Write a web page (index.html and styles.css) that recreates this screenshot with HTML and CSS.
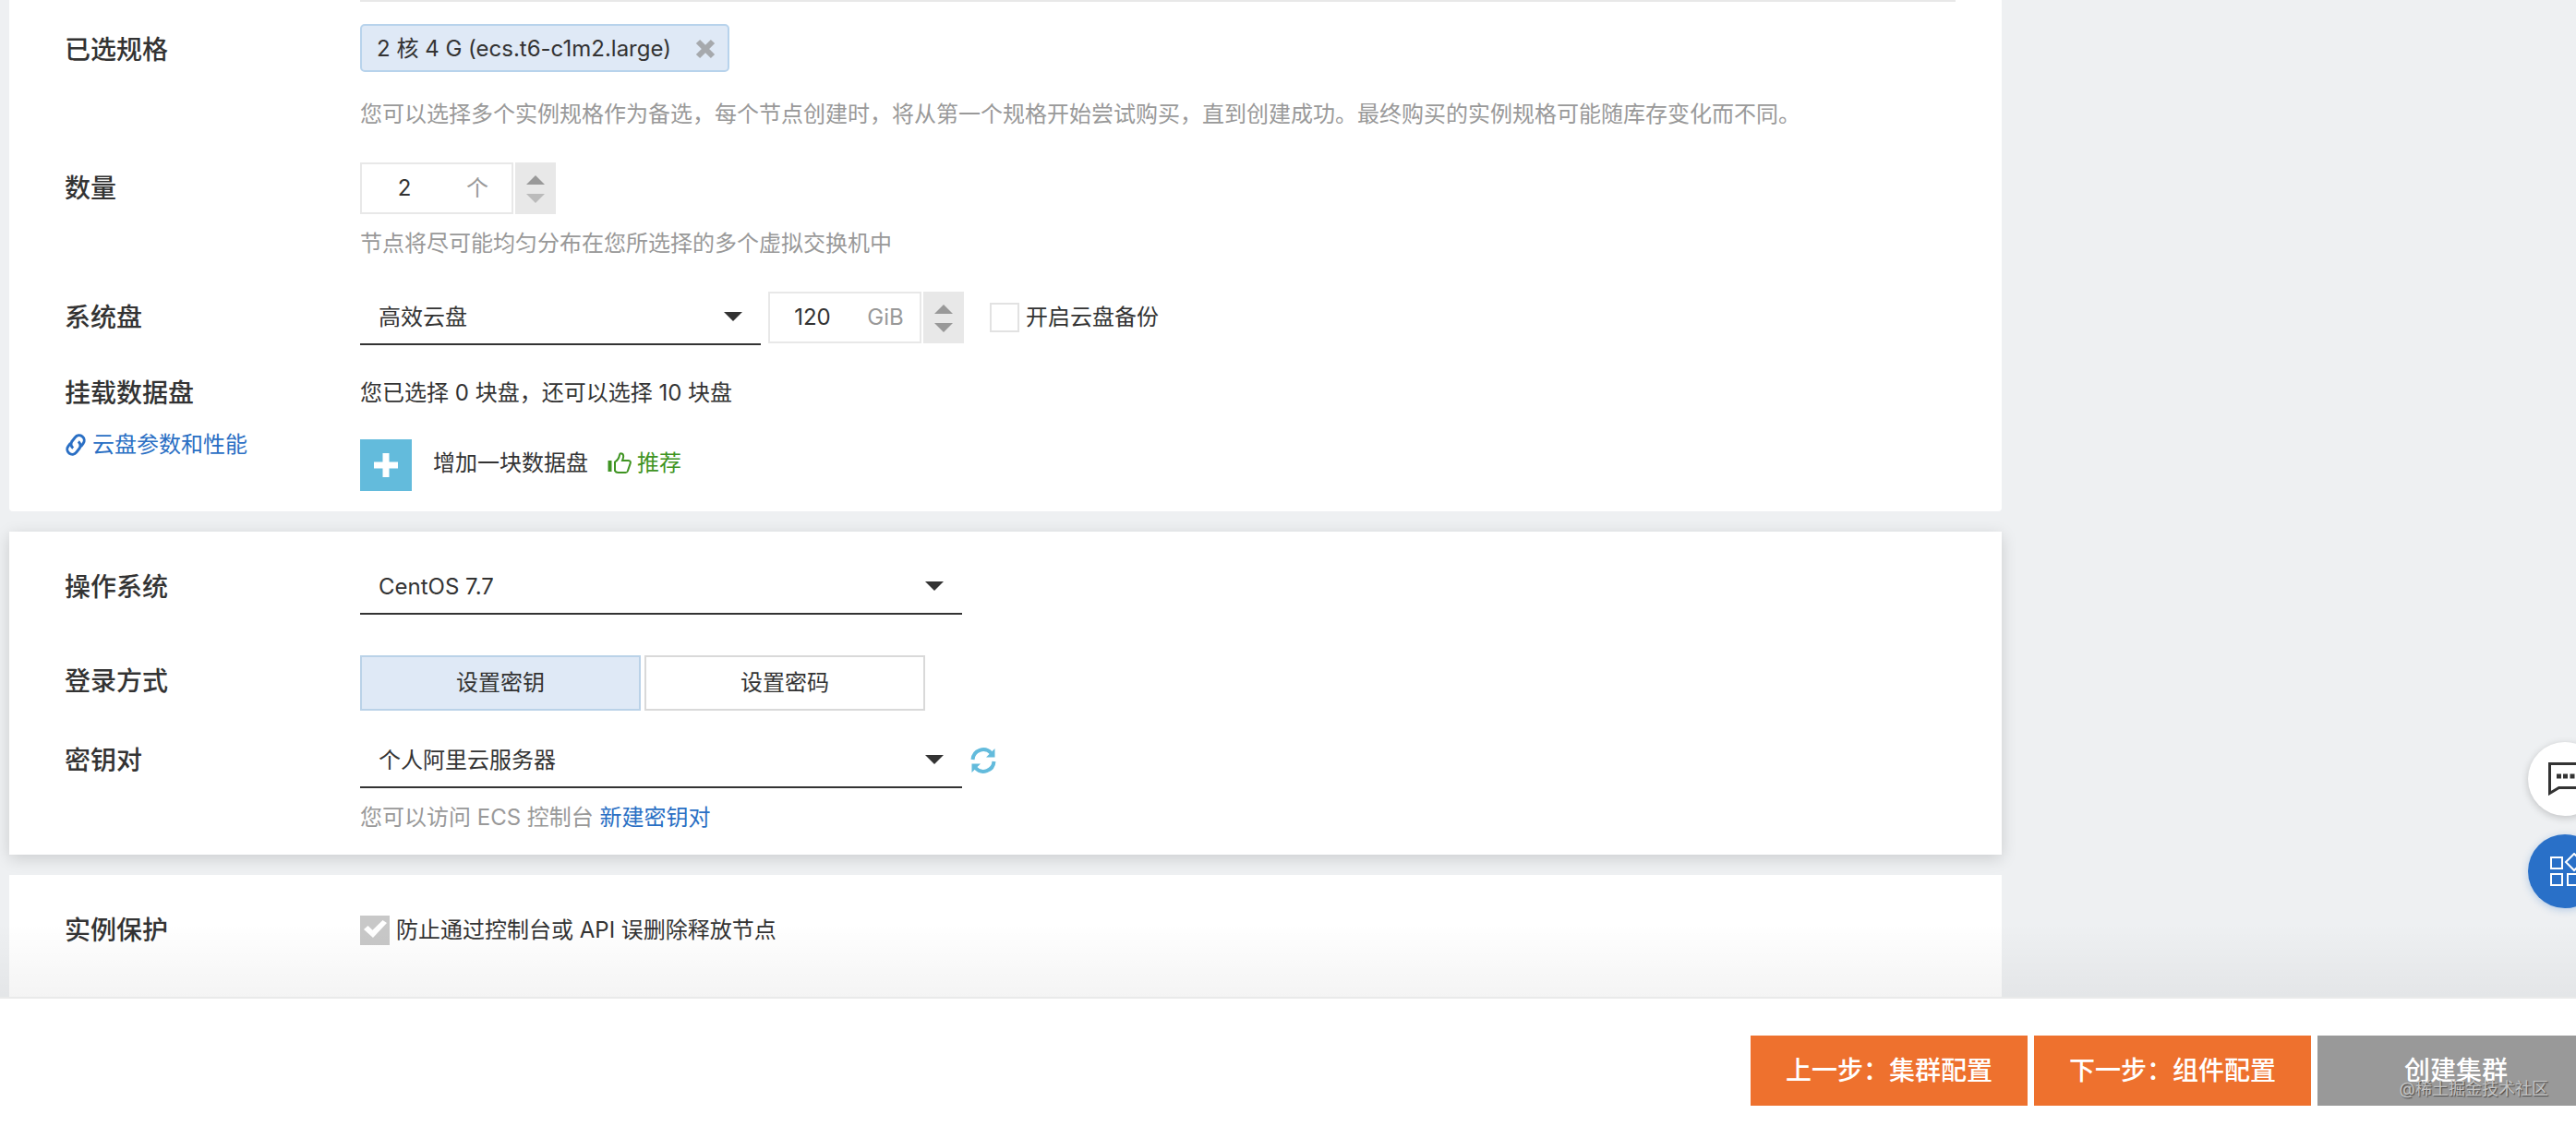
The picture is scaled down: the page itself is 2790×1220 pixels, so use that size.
FILE: index.html
```html
<!DOCTYPE html>
<html lang="zh-CN">
<head>
  <meta charset="UTF-8">
  <title>创建集群</title>
  <link rel="stylesheet" href="styles.css">
</head>
<body>

<main class="page">
  <section class="panel first">
    <hr class="divider">
    <div class="row">
      <div class="label">已选规格</div>
      <div class="field">
        <div class="chip">
          <span>2 核 4 G (ecs.t6-c1m2.large)</span>
          <button class="chip-close" type="button" aria-label="移除">
            <svg width="22" height="22" viewBox="0 0 22 22"><path d="M3 3L19 19M19 3L3 19" stroke="#a6a9ad" stroke-width="6"/></svg>
          </button>
        </div>
        <p class="hint spec-hint">您可以选择多个实例规格作为备选，每个节点创建时，将从第一个规格开始尝试购买，直到创建成功。最终购买的实例规格可能随库存变化而不同。</p>
      </div>
    </div>

    <div class="row">
      <label class="label" for="count">数量</label>
      <div class="field">
        <div class="controls">
          <div class="number">
            <input type="text" id="count" value="2">
            <span class="unit">个</span>
          </div>
          <div class="stepper">
            <button class="up" type="button" aria-label="增加"></button>
            <button class="down off" type="button" aria-label="减少"></button>
          </div>
        </div>
        <p class="hint">节点将尽可能均匀分布在您所选择的多个虚拟交换机中</p>
      </div>
    </div>

    <div class="row">
      <label class="label" for="disk">系统盘</label>
      <div class="field controls">
        <div class="select short">
          <select id="disk"><option>高效云盘</option></select>
        </div>
        <div class="number">
          <input type="text" id="size" value="120" aria-label="系统盘容量">
          <span class="unit">GiB</span>
        </div>
        <div class="stepper">
          <button class="up" type="button" aria-label="增加"></button>
          <button class="down" type="button" aria-label="减少"></button>
        </div>
        <label class="check backup"><input type="checkbox">开启云盘备份</label>
      </div>
    </div>

    <div class="row">
      <div class="label tight">
        挂载数据盘
        <a class="doc-link" href="#">
          <svg width="24" height="26" viewBox="-12 -13 24 26" fill="none" stroke="#2a6fc4" stroke-width="3">
            <g transform="rotate(-52)">
              <path d="M-2 -5.500H-6A5.500 5.500 0 0 0 -6 5.500H0A5.500 5.500 0 0 0 4.500 0"/>
              <path d="M2 5.500H6A5.500 5.500 0 0 0 6 -5.500H0A5.500 5.500 0 0 0 -4.500 0"/>
            </g>
          </svg>
          云盘参数和性能
        </a>
      </div>
      <div class="field">
        <p class="text">您已选择 0 块盘，还可以选择 10 块盘</p>
        <div class="add-disk">
          <button class="plus" type="button" id="addDisk" aria-label="增加一块数据盘">
            <svg width="26" height="26" viewBox="0 0 26 26"><path d="M13 0V26M0 13H26" stroke="#fff" stroke-width="7"/></svg>
          </button>
          <label for="addDisk">增加一块数据盘</label>
          <span class="recommend">
            <svg width="26" height="24" viewBox="0 0 26 24" fill="none" stroke="#3f9422" stroke-width="2">
              <path d="M2.500 9V21" stroke-width="4"/>
              <path d="M8 10.500C11.500 8.500 12.500 6 13 3C13.400 .600 17 .800 17.200 4C17.300 6 16.600 7.400 16 9H22.500C25 9 25.200 11 24.500 12.600L21.800 20.500C21.300 21.800 20.500 22 19.500 22H11.500C9.500 22 8.500 21 8 20Z"/>
            </svg>
            推荐
          </span>
        </div>
      </div>
    </div>
  </section>

  <section class="panel raised">
    <div class="row">
      <label class="label" for="os">操作系统</label>
      <div class="field">
        <div class="select">
          <select id="os"><option>CentOS 7.7</option></select>
        </div>
      </div>
    </div>

    <div class="row login-row">
      <div class="label">登录方式</div>
      <div class="field tabs">
        <button class="tab active" type="button">设置密钥</button>
        <button class="tab" type="button">设置密码</button>
      </div>
    </div>

    <div class="row key-row">
      <label class="label" for="key">密钥对</label>
      <div class="field">
        <div class="controls">
          <div class="select">
            <select id="key"><option>个人阿里云服务器</option></select>
          </div>
          <button class="refresh" type="button" aria-label="刷新">
            <svg width="28" height="28" viewBox="0 0 28 28" fill="none" stroke="#63bbdc" stroke-width="4">
              <path d="M2.500 13A11.500 11.500 0 0 1 22.500 6"/>
              <path d="M25.500 15A11.500 11.500 0 0 1 5.500 22"/>
              <path d="M26.500 1V10.500H17ZM1.500 27V17.500H11Z" fill="#63bbdc" stroke="none"/>
            </svg>
          </button>
        </div>
        <p class="hint">您可以访问 ECS 控制台 <a href="#">新建密钥对</a></p>
      </div>
    </div>
  </section>

  <section class="panel last">
    <div class="row">
      <div class="label">实例保护</div>
      <div class="field">
        <label class="check"><input type="checkbox" checked disabled>防止通过控制台或 API 误删除释放节点</label>
      </div>
    </div>
  </section>
</main>

<footer class="footer">
  <button class="step" type="button">上一步：集群配置</button>
  <button class="step" type="button">下一步：组件配置</button>
  <button class="step disabled" type="button" disabled>创建集群</button>
</footer>

<div class="float-bar">
  <button class="float-btn" type="button" aria-label="在线咨询">
    <svg width="44" height="36" viewBox="0 0 44 36">
      <path d="M1.500 1.500H42V27.500H11.500L1.500 33.500Z" fill="none" stroke="#333" stroke-width="3"/>
      <path d="M9 12.500h5v5h-5zM16 12.500h5v5h-5zM23.500 12.500h5v5h-5z" fill="#333"/>
    </svg>
  </button>
  <button class="float-btn blue" type="button" aria-label="应用">
    <svg width="40" height="40" viewBox="0 0 40 40" fill="none" stroke="#fff" stroke-width="2">
      <path d="M3 5H15V17H3ZM3 23H15V35H3ZM21 23H33V35H21ZM19 10L28 1L37 10L28 19Z"/>
    </svg>
  </button>
</div>

<div class="watermark">@稀土掘金技术社区</div>

</body>
</html>
```
FILE: styles.css
```css
* {
  box-sizing: border-box;
}

body {
  margin: 0;
  min-height: 100vh;
  position: relative;
  display: flex;
  flex-direction: column;
  overflow: hidden;
  background: #eef0f2;
  color: #333;
  font-family: Inter, "Noto Sans CJK SC", sans-serif;
  font-size: 24px;
  line-height: 36px;
}

button, input, select {
  font: inherit;
  color: inherit;
  padding: 0;
  margin: 0;
}

button {
  border: none;
  background: none;
  cursor: pointer;
}

svg {
  display: block;
  flex: none;
}

p {
  margin: 0;
}

a {
  color: #2a6fc4;
  text-decoration: none;
}

.page {
  flex: 1;
  position: relative;
  display: flex;
  flex-direction: column;
  gap: 22px;
  padding: 0 622px 0 10px;
}

/* fade above the footer */
.page::after {
  content: "";
  position: absolute;
  left: 0;
  right: 0;
  bottom: 0;
  height: 80px;
  background: linear-gradient(rgba(0, 0, 0, 0), rgba(0, 0, 0, 0.045));
  pointer-events: none;
}

.panel {
  background: #fff;
  padding: 32px 50px 22px 60px;
}

.panel.first {
  padding-top: 0;
  border-radius: 0 0 4px 4px;
}

.panel.raised {
  box-shadow: 0 4px 16px rgba(0, 0, 0, 0.15);
}

.panel.last {
  flex: 1;
}

.divider {
  height: 2px;
  margin: 0 0 24px 320px;
  border: none;
  background: #e8e8e8;
}

.row {
  display: grid;
  grid-template-columns: 320px 1fr;
}

.row + .row {
  margin-top: 34px;
}

.row + .login-row {
  margin-top: 44px;
}

.row + .key-row {
  margin-top: 26px;
}

.label {
  font-size: 28px;
  font-weight: 500;
  line-height: 56px;
}

.label.tight {
  line-height: 36px;
}

.doc-link {
  display: flex;
  align-items: center;
  gap: 6px;
  margin-top: 20px;
  font-size: 24px;
  font-weight: 400;
}

.hint {
  margin-top: 14px;
  color: #999;
}

.spec-hint {
  margin-top: 28px;
}

.chip {
  display: inline-flex;
  align-items: center;
  gap: 26px;
  height: 52px;
  padding: 2px 13px 0 16px;
  border: 2px solid #b8d3ec;
  border-radius: 5px;
  background: #dfe9f6;
  vertical-align: top;
}

.controls {
  display: flex;
  align-items: flex-start;
}

.number {
  display: flex;
  width: 166px;
  height: 56px;
  border: 2px solid #e8e8e8;
}

.number input {
  width: 92px;
  border: none;
  outline: none;
  background: none;
  text-align: center;
}

.unit {
  width: 66px;
  line-height: 52px;
  text-align: center;
  color: #999;
}

.stepper {
  width: 44px;
  height: 56px;
  margin-left: 2px;
  padding: 14px 12px 12px;
  display: flex;
  flex-direction: column;
  justify-content: space-between;
  background: #e8e8e8;
}

.stepper button {
  border: 10px solid transparent;
  width: 20px;
  height: 10px;
}

.stepper .up {
  border-top: none;
  border-bottom-color: #999;
}

.stepper .down {
  border-bottom: none;
  border-top-color: #999;
}

.stepper .off {
  border-top-color: #bbb;
}

.select {
  position: relative;
  width: 652px;
}

.select.short {
  width: 434px;
  margin-right: 8px;
}

.select select {
  display: block;
  width: 100%;
  height: 58px;
  padding-left: 20px;
  border: none;
  border-bottom: 2px solid #333;
  border-radius: 0;
  outline: none;
  background: none;
  appearance: none;
}

.select::after {
  content: "";
  position: absolute;
  right: 20px;
  top: 22px;
  border: 10px solid transparent;
  border-top-color: #333;
  border-bottom: none;
  pointer-events: none;
}

.check {
  display: inline-flex;
  align-items: center;
  gap: 7px;
  height: 56px;
}

.backup {
  margin-left: 28px;
}

.check input {
  appearance: none;
  width: 32px;
  height: 32px;
  border: 2px solid #e2e2e2;
  background: #fff;
}

.check input:checked {
  position: relative;
  border-color: #c8c8c8;
  background: #c8c8c8;
}

.check input:checked::after {
  content: "";
  position: absolute;
  left: 2px;
  top: 3px;
  width: 25px;
  height: 19px;
  background: #fff;
  clip-path: polygon(0 52%, 18% 32%, 38% 56%, 82% 0, 100% 16%, 40% 100%);
}

.add-disk {
  display: flex;
  align-items: center;
  margin-top: 32px;
}

.plus {
  display: grid;
  place-items: center;
  width: 56px;
  height: 56px;
  margin-right: 23px;
  background: #63bbdc;
}

.add-disk label,
.recommend {
  padding-bottom: 4px;
}

.recommend {
  display: flex;
  align-items: center;
  gap: 6px;
  margin-left: 21px;
  color: #3f9422;
}

.tabs {
  display: flex;
  gap: 4px;
}

.tab {
  width: 304px;
  height: 60px;
  border: 2px solid #d9d9d9;
  background: #fff;
}

.tab.active {
  border-color: #bad2e8;
  background: #dfe9f6;
}

.refresh {
  margin: 14px 0 0 9px;
}

.footer {
  display: flex;
  justify-content: flex-end;
  gap: 7px;
  margin-right: -20px;
  padding: 40px 0 22px;
  border-top: 2px solid #e9eaea;
  background: #fff;
}

.step {
  flex: none;
  width: 300px;
  height: 76px;
  background: #ee712e;
  color: #fff;
  font-size: 28px;
  font-weight: 500;
}

.step.disabled {
  background: #999;
}

/* floating helpers, half hidden at the window edge */
.float-bar {
  position: absolute;
  top: 804px;
  right: -28px;
  display: flex;
  flex-direction: column;
  gap: 20px;
}

.float-btn {
  width: 80px;
  height: 80px;
  padding-left: 22px;
  border-radius: 50%;
  background: #fff;
  box-shadow: 0 2px 8px rgba(0, 0, 0, 0.2);
}

.float-btn.blue {
  background: #2970c8;
  box-shadow: 0 2px 8px rgba(41, 112, 200, 0.3);
}

.watermark {
  position: absolute;
  right: 30px;
  bottom: 22px;
  font-size: 18px;
  color: #c4c4c4;
  text-shadow: 1px 1px 1px #444;
  pointer-events: none;
}
```
